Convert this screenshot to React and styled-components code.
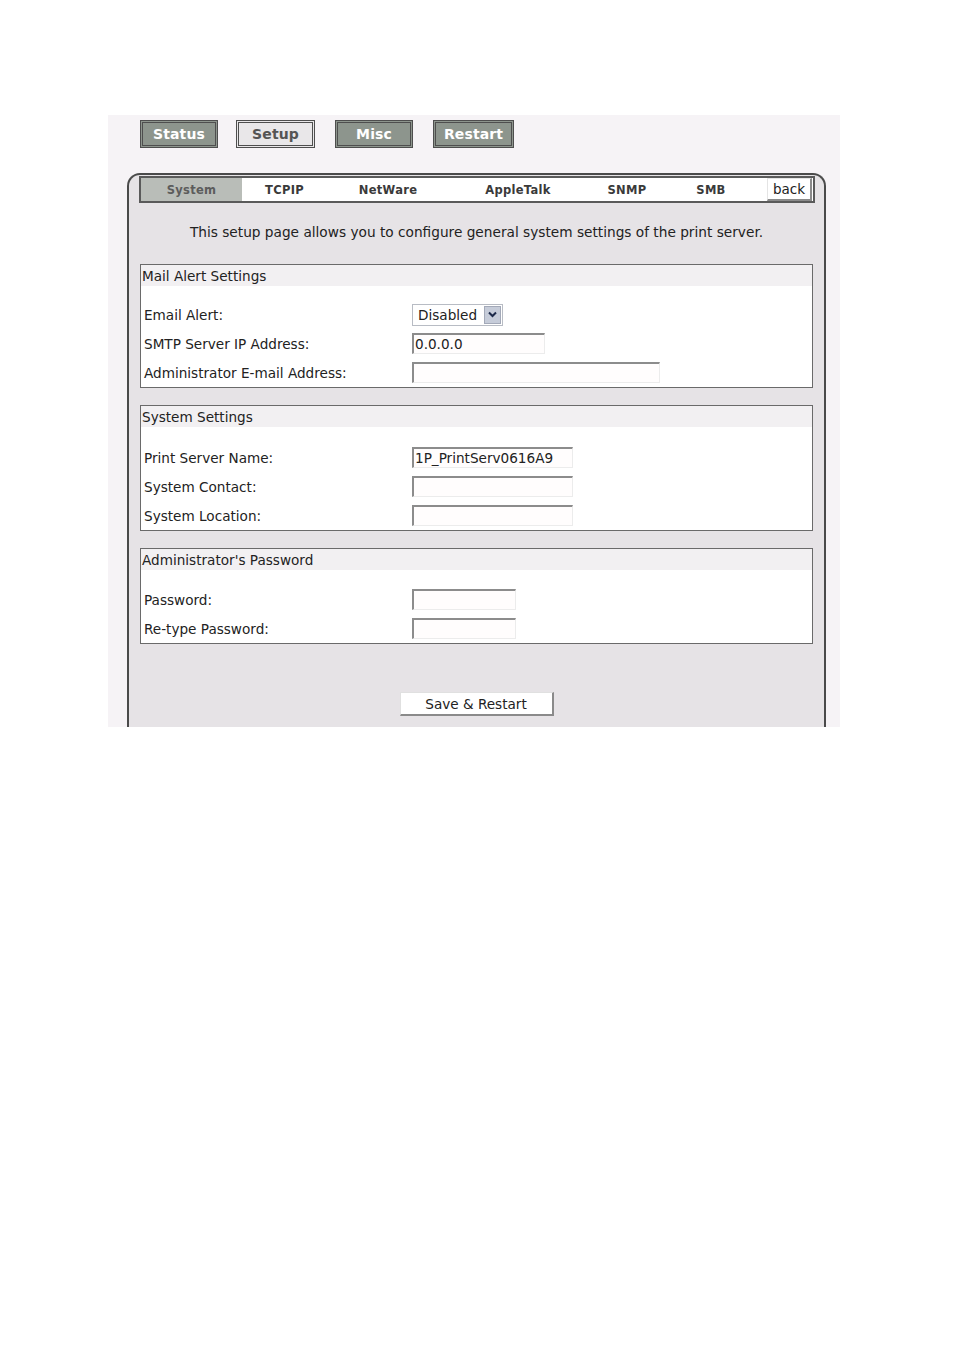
import React from 'react';
import styled, { createGlobalStyle } from 'styled-components';

const Global = createGlobalStyle`
  html, body {
    margin: 0;
    padding: 0;
    background: #ffffff;
  }
  body {
    font-family: "DejaVu Sans", Verdana, sans-serif;
    color: #222;
  }
`;

const Page = styled.div`
  width: 954px;
  height: 1350px;
  padding-top: 115px;
  box-sizing: border-box;
`;

const Frame = styled.div`
  margin-left: 108px;
  width: 732px;
  height: 612px;
  background: #f6f3f6;
  overflow: hidden;
  display: flex;
  flex-direction: column;
`;

const NavBar = styled.div`
  display: flex;
  padding: 5px 0 0 32px;
  height: 58px;
  box-sizing: border-box;
`;

const NavButton = styled.div`
  width: ${(p) => p.$w}px;
  height: 28px;
  margin-right: ${(p) => p.$gap}px;
  box-sizing: border-box;
  border: 3px double #4e4e4e;
  background: ${(p) => (p.$active ? '#e9e7e9' : '#8d958d')};
  color: ${(p) => (p.$active ? '#555' : '#fff')};
  font-weight: bold;
  font-size: 14px;
  display: flex;
  align-items: center;
  justify-content: center;
  letter-spacing: 0.1px;
`;

const Panel = styled.div`
  margin-left: 19px;
  width: 699px;
  flex: 1;
  box-sizing: border-box;
  border: 2px solid #4a4a4a;
  border-bottom: none;
  border-radius: 13px 13px 0 0;
  background: #e6e3e6;
  padding: 1px 10px 0 10px;
  display: flex;
  flex-direction: column;
`;

const TabBar = styled.div`
  display: flex;
  height: 27px;
  box-sizing: border-box;
  border: 2px solid #5a5a5a;
  background: #fff;
  margin-right: -1px;
`;

const Tab = styled.div`
  width: ${(p) => p.$w}px;
  display: flex;
  align-items: center;
  justify-content: center;
  font-size: 11.5px;
  letter-spacing: 0.3px;
  font-weight: bold;
  color: ${(p) => (p.$active ? '#5c5c5c' : '#3a3a3a')};
  background: ${(p) => (p.$active ? '#b9bdb8' : '#fff')};
`;

const Spacer = styled.div`
  width: 12px;
`;

const BackButton = styled.div`
  width: 45px;
  box-sizing: border-box;
  background: #fff;
  border-left: 1px solid #e4e4e4;
  border-top: 1px solid #e4e4e4;
  border-right: 2px solid #8a8a8a;
  border-bottom: 2px solid #8a8a8a;
  font-size: 13.5px;
  color: #222;
  display: flex;
  align-items: center;
  justify-content: center;
  padding-bottom: 1px;
`;

const Intro = styled.p`
  margin: 21px 0 23px 0;
  text-align: center;
  font-size: 13.7px;
  line-height: 17px;
  color: #222;
`;

const Section = styled.div`
  background: #fff;
  border: 1px solid #6a6a6a;
  margin: 0 1px 17px 1px;
`;

const SectionHead = styled.div`
  height: 21px;
  background: #f2f0f2;
  font-size: 13.6px;
  line-height: 22px;
  padding-left: 1px;
  color: #222;
`;

const SectionBody = styled.div`
  padding-top: ${(p) => p.$pad}px;
`;

const Row = styled.div`
  height: 29px;
  display: flex;
  align-items: center;
`;

const Label = styled.div`
  width: 268px;
  padding-left: 3px;
  padding-top: 1px;
  font-size: 13.6px;
  color: #222;
`;

const TextBox = styled.div`
  width: ${(p) => p.$w}px;
  height: 21px;
  box-sizing: border-box;
  background: #fffdfd;
  border-top: 2px solid #8c8c8c;
  border-left: 2px solid #8c8c8c;
  border-right: 1px solid #ececec;
  border-bottom: 1px solid #ececec;
  font-size: 13.6px;
  line-height: 18px;
  padding-left: 1px;
  color: #222;
`;

const Select = styled.div`
  width: 91px;
  height: 22px;
  box-sizing: border-box;
  border: 1px solid #b8bcc4;
  background: #fff;
  display: flex;
  align-items: stretch;
`;

const SelectText = styled.div`
  flex: 1;
  font-size: 13.6px;
  line-height: 21px;
  padding-left: 5px;
  color: #222;
`;

const SelectArrow = styled.div`
  width: 17px;
  margin: 1px;
  background: #c6ccd9;
  border: 1px solid #a3a9b8;
  box-sizing: border-box;
  display: flex;
  align-items: center;
  justify-content: center;
`;

const Footer = styled.div`
  display: flex;
  justify-content: center;
  margin-top: 31px;
`;

const SaveButton = styled.div`
  width: 154px;
  height: 24px;
  box-sizing: border-box;
  background: #fff;
  border-left: 1px solid #e0e0e0;
  border-top: 1px solid #e0e0e0;
  border-right: 2px solid #8a8a8a;
  border-bottom: 2px solid #8a8a8a;
  font-size: 13.6px;
  display: flex;
  align-items: center;
  justify-content: center;
  color: #222;
`;

const navItems = [
  { label: 'Status', w: 78, gap: 18 },
  { label: 'Setup', w: 79, gap: 20, active: true },
  { label: 'Misc', w: 78, gap: 20 },
  { label: 'Restart', w: 81, gap: 0 },
];

const tabs = [
  { label: 'System', w: 101, active: true },
  { label: 'TCPIP', w: 85 },
  { label: 'NetWare', w: 122 },
  { label: 'AppleTalk', w: 138 },
  { label: 'SNMP', w: 80 },
  { label: 'SMB', w: 88 },
];

function Chevron() {
  return (
    <svg width="9" height="7" viewBox="0 0 9 7">
      <path d="M1 1.5 L4.5 5 L8 1.5" fill="none" stroke="#1d2a4a" strokeWidth="2" />
    </svg>
  );
}

export default function App() {
  return (
    <Page>
      <Global />
      <Frame>
        <NavBar>
          {navItems.map((n) => (
            <NavButton key={n.label} $w={n.w} $gap={n.gap} $active={n.active}>
              {n.label}
            </NavButton>
          ))}
        </NavBar>
        <Panel>
          <TabBar>
            {tabs.map((t) => (
              <Tab key={t.label} $w={t.w} $active={t.active}>
                {t.label}
              </Tab>
            ))}
            <Spacer />
            <BackButton>back</BackButton>
          </TabBar>

          <Intro>This setup page allows you to configure general system settings of the print server.</Intro>

          <Section>
            <SectionHead>Mail Alert Settings</SectionHead>
            <SectionBody $pad={14}>
              <Row>
                <Label>Email Alert:</Label>
                <Select>
                  <SelectText>Disabled</SelectText>
                  <SelectArrow><Chevron /></SelectArrow>
                </Select>
              </Row>
              <Row>
                <Label>SMTP Server IP Address:</Label>
                <TextBox $w={133}>0.0.0.0</TextBox>
              </Row>
              <Row>
                <Label>Administrator E-mail Address:</Label>
                <TextBox $w={248} />
              </Row>
            </SectionBody>
          </Section>

          <Section>
            <SectionHead>System Settings</SectionHead>
            <SectionBody $pad={16}>
              <Row>
                <Label>Print Server Name:</Label>
                <TextBox $w={161}>1P_PrintServ0616A9</TextBox>
              </Row>
              <Row>
                <Label>System Contact:</Label>
                <TextBox $w={161} />
              </Row>
              <Row>
                <Label>System Location:</Label>
                <TextBox $w={161} />
              </Row>
            </SectionBody>
          </Section>

          <Section>
            <SectionHead>Administrator's Password</SectionHead>
            <SectionBody $pad={15}>
              <Row>
                <Label>Password:</Label>
                <TextBox $w={104} />
              </Row>
              <Row>
                <Label>Re-type Password:</Label>
                <TextBox $w={104} />
              </Row>
            </SectionBody>
          </Section>

          <Footer>
            <SaveButton>Save &amp; Restart</SaveButton>
          </Footer>
        </Panel>
      </Frame>
    </Page>
  );
}
